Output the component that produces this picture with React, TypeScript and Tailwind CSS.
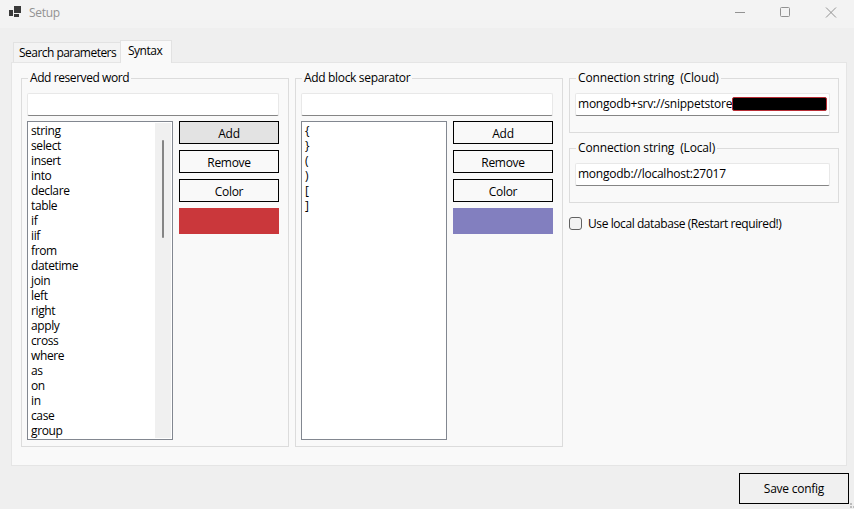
import type { ReactNode } from "react";

const reservedWords = [
  "string", "select", "insert", "into", "declare", "table", "if", "iif", "from", "datetime", "join",
  "left", "right", "apply", "cross", "where", "as", "on", "in", "case", "group",
];
const separators = ["{", "}", "(", ")", "[", "]"];

function Group({ title, className, titleClass, children }: {
  title: ReactNode; className: string; titleClass: string; children: ReactNode;
}) {
  return (
    <section className={`border border-[#dcdcdc] px-[5px] ${className}`}>
      <h2 className={`-mt-[9px] ml-px h-[15px] w-fit bg-[#f9f9f9] px-[2px] leading-[15px] whitespace-pre ${titleClass}`}>{title}</h2>
      {children}
    </section>
  );
}

function TextBox({ children }: { children?: ReactNode }) {
  return (
    <div className="mt-[8px] h-[23px] rounded-[2px] border border-[#e8e8e8] border-b-[#858585] bg-white pl-[2px] leading-[19px] tracking-[-0.24px] whitespace-pre">
      {children}
    </div>
  );
}

function PushButton({ label, active = false }: { label: string; active?: boolean }) {
  return (
    <button className={`block h-[23px] w-full border border-black pt-[2px] text-center leading-[19px] tracking-[-0.3px] ${active ? "bg-[#e3e3e3]" : "bg-[#f9f9f9]"}`}>
      {label}
    </button>
  );
}

function WordEditor({ title, titleClass, words, swatch, active = false, scroll = false }: {
  title: ReactNode; titleClass: string; words: string[]; swatch: string; active?: boolean; scroll?: boolean;
}) {
  return (
    <Group title={title} titleClass={titleClass} className="h-[369px] w-[268px]">
      <div className="w-[252px]">
        <TextBox />
        <div className="mt-[5px] flex gap-[6px]">
          <div className="flex h-[319px] w-[146px] border border-[#828790] bg-white p-px">
            <ul className="flex-1 pl-[2px] tracking-[-0.38px]">
              {words.map((word) => (
                <li key={word} className="h-[15px] leading-[15px]">{word}</li>
              ))}
            </ul>
            {scroll && (
              <div className="w-[16px] bg-[#f0f0f0] pt-[17px] pl-[7px]">
                <div className="h-[98px] w-[2px] rounded-full bg-[#858585]" />
              </div>
            )}
          </div>
          <div className="flex w-[100px] flex-col gap-[6px]">
            <PushButton label="Add" active={active} />
            <PushButton label="Remove" />
            <PushButton label="Color" />
            <div className={`h-[26px] ${swatch}`} />
          </div>
        </div>
      </div>
    </Group>
  );
}

export default function App() {
  return (
    <div className="flex h-[509px] w-[854px] flex-col overflow-hidden bg-[#efefef] font-['Open_Sans','Noto_Sans',sans-serif] text-[12px] text-black">
      <header className="flex h-[28px] items-start bg-[#f3f3f3] text-[#929292]">
        <svg className="mt-[6px] ml-[9px]" width="12" height="12" viewBox="0 0 12 12" fill="#3a3a3a">
          <path d="M5 0h7v7H5zM0 4h4v6H0zM5 8h5v3H5z" />
        </svg>
        <span className="mt-[5px] ml-[8px] flex-1 leading-[15px] tracking-[-0.3px]">Setup</span>
        <svg width="119" height="28" viewBox="0 0 119 28" fill="none" stroke="#929292">
          <path d="M0 12.5h10M91 7.5l10 10M101 7.5l-10 10" />
          <rect x="45.5" y="7.5" width="9" height="9" rx="1" />
        </svg>
      </header>

      <nav className="flex h-[34px] items-end pl-[13px]">
        <div className="h-[20px] w-[108px] border border-b-0 border-[#e2e2e2] bg-[#f3f3f3] pl-[5px] leading-[20px] tracking-[-0.53px] whitespace-nowrap">
          Search parameters
        </div>
        <div className="z-10 -mb-px -ml-px h-[23px] w-[52px] border border-b-0 border-[#e2e2e2] bg-[#f9f9f9] pl-[7px] leading-[20px] tracking-[-0.5px]">
          Syntax
        </div>
      </nav>

      <main className="ml-[11px] flex h-[404px] w-[836px] gap-[6px] border border-[#e5e5e5] bg-[#f9f9f9] pt-[15px] pl-[9px]">
        <WordEditor title="Add reserved word" titleClass="tracking-[-0.42px]" words={reservedWords} swatch="bg-[#ca373b]" active scroll />
        <WordEditor title="Add block separator" titleClass="tracking-[-0.33px]" words={separators} swatch="bg-[#827fbf]" />
        <div className="w-[270px]">
          <Group title="Connection string  (Cloud)" titleClass="tracking-[-0.15px]" className="h-[55px]">
            <div className="w-[255px]">
              <TextBox>
                <span className="flex items-center">
                  <span className="w-[154px] tracking-[-0.23px]">mongodb+srv://snippetstore</span>
                  <span className="h-[14px] w-[95px] rounded-[2px] border border-[#b72c34] bg-black" />
                </span>
              </TextBox>
            </div>
          </Group>
          <Group title="Connection string  (Local)" titleClass="tracking-[-0.15px]" className="mt-[15px] h-[55px]">
            <div className="w-[255px]">
              <TextBox>mongodb://localhost:27017</TextBox>
            </div>
          </Group>
          <label className="mt-[14px] flex h-[13px] items-center">
            <span className="h-[13px] w-[13px] rounded-[3px] border border-[#626262] bg-[#f3f3f3]" />
            <span className="ml-[6px] leading-[15px] tracking-[-0.42px] whitespace-nowrap">Use local database (Restart required!)</span>
          </label>
        </div>
      </main>

      <footer className="flex h-[43px] justify-end pt-[7px]">
        <button className="h-[31px] w-[110px] border border-black bg-[#f0f0f0] leading-[29px] tracking-[-0.25px]">Save config</button>
        <svg className="mt-[30px]" width="5" height="6" viewBox="0 0 5 6" fill="#bcbcbc">
          <path d="M1 0h2v2H1zM-2 3h2v2h-2zM1 3h2v2H1zM4 3h1v2H4z" />
        </svg>
      </footer>
    </div>
  );
}
